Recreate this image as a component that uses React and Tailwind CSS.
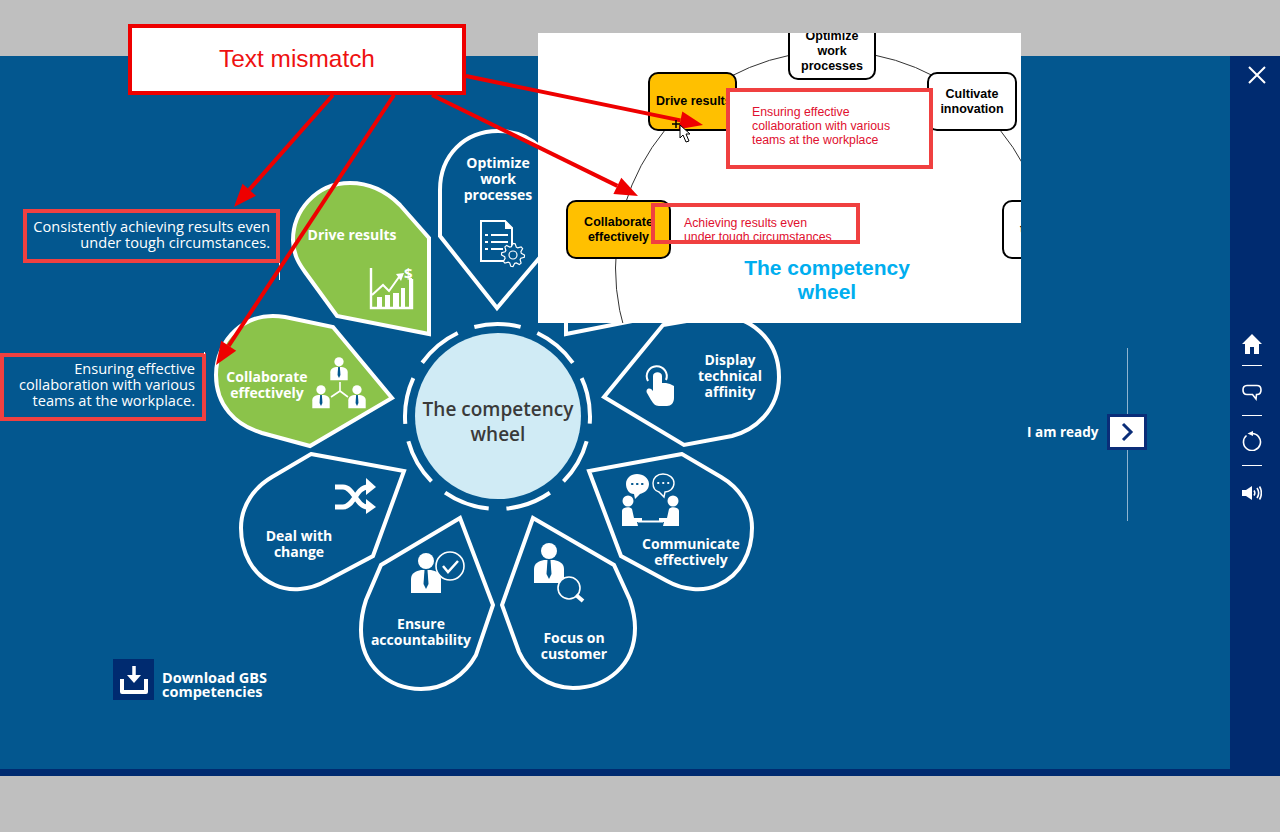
import React from "react";

const petals = [
  { name: "optimize", d: "M497 308 L440 236 L440 190 C440 155 465 131 498 131 C531 131 558 155 558 190 L558 236 Z" },
  { name: "cultivate", d: "M566 334 L566 238 L595 205 C610 190 627 183 645 183 C680 183 702 212 702 240 C702 255 695 265 690 272 L658 316 Z" },
  { name: "display", d: "M604 397 L663 325 L710 317 C750 312 779 340 779 377 C779 410 755 430 732 436 L684 445 Z" },
  { name: "communicate", d: "M682 454 L589 471 L621 556 L667 581 C683 590 703 592 718 585 C741 575 752 552 752 528 C752 505 738 487 721 477 Z" },
  { name: "focus", d: "M533 518 L614 565 L630 600 C634 612 635 620 635 628 C635 665 607 688 573 688 C548 688 528 672 519 652 L502 605 Z" },
  { name: "ensure", d: "M460 518 L381 565 L366 600 C362 612 361 620 361 630 C361 665 388 689 421 689 C445 689 465 675 476 655 L493 605 Z" },
  { name: "deal", d: "M311 454 L404 471 L373 556 L326 581 C310 590 290 592 275 585 C252 575 241 552 241 528 C241 505 255 487 272 477 Z" },
  { name: "collaborate", d: "M392 398 L333 327 L285 317 C245 310 216 340 216 375 C216 405 235 425 262 433 L310 446 Z", fill: "#8bc34a" },
  { name: "drive", d: "M429 334 L429 238 L400 205 C385 190 368 183 350 183 C315 183 293 212 293 240 C293 255 300 265 305 272 L337 316 Z", fill: "#8bc34a" },
];

const annotationArrows = [
  [466, 76, 703, 125],
  [432, 95, 638, 196],
  [333, 95, 234, 207],
  [394, 95, 216, 365],
];

// gear outline for the optimize icon
const gearPoints = (cx, cy, outer, inner, teeth) => {
  const pts = [];
  for (let i = 0; i < teeth * 4; i++) {
    const a = (i / (teeth * 4)) * Math.PI * 2;
    const r = i % 4 < 2 ? outer : inner;
    pts.push(`${(cx + r * Math.cos(a)).toFixed(1)},${(cy + r * Math.sin(a)).toFixed(1)}`);
  }
  return pts.join(" ");
};

const Person = ({ x, y, s = 1, tie = false }) => (
  <g transform={`translate(${x} ${y}) scale(${s})`}>
    <circle cx="0" cy="-9" r="8" fill="#fff" />
    <path d="M-15 23 L-15 9 C-15 3 -10 1 -5 0 L5 0 C10 1 15 3 15 9 L15 23 Z" fill="#fff" />
    {tie && <path d="M-1.5 0 L1.5 0 L2.5 14 L0 19 L-2.5 14 Z" fill="#03578f" />}
  </g>
);

const Arrow = ({ coords }) => {
  const [x1, y1, x2, y2] = coords;
  const len = Math.hypot(x2 - x1, y2 - y1);
  const ux = (x2 - x1) / len;
  const uy = (y2 - y1) / len;
  const bx = x2 - ux * 23;
  const by = y2 - uy * 23;
  return (
    <g>
      <line x1={x1} y1={y1} x2={bx} y2={by} stroke="#ee0000" strokeWidth="4" />
      <polygon
        points={`${x2},${y2} ${bx - uy * 9},${by + ux * 9} ${bx + uy * 9},${by - ux * 9}`}
        fill="#ee0000"
      />
    </g>
  );
};

const WheelDrawing = () => (
  <svg className="absolute left-0 top-0 h-[713px] w-[1230px]" viewBox="0 56 1230 713">
    {petals.map((p) => (
      <path key={p.name} d={p.d} fill={p.fill || "none"} stroke="#fff" strokeWidth="4" />
    ))}
    <circle
      cx="497.5"
      cy="416.5"
      r="92.5"
      fill="none"
      stroke="#fff"
      strokeWidth="4"
      pathLength="360"
      strokeDasharray="29 11"
      transform="rotate(-104.5 497.5 416.5)"
    />

    {/* optimize: document + gear */}
    <path d="M481 221 H505 L512 228 V261 H481 Z" fill="none" stroke="#fff" strokeWidth="2" />
    <path d="M505 220 V229 H513 Z" fill="#fff" />
    <path d="M491 235 H508 M491 242 H508 M491 249 H503" stroke="#fff" strokeWidth="2" />
    <path d="M485 235 H488 M485 242 H488 M485 249 H488" stroke="#fff" strokeWidth="2" />
    <polygon points={gearPoints(513, 255, 11.5, 8.5, 8)} fill="#03578f" stroke="#fff" strokeWidth="1.2" />
    <circle cx="513" cy="255" r="4" fill="none" stroke="#fff" strokeWidth="1.2" />

    {/* drive: growth chart */}
    <path d="M371 268 V308 H412 V279" fill="none" stroke="#fff" strokeWidth="2.4" />
    <path d="M409 278 H412 V308 H409 Z" fill="#fff" />
    <path d="M377 297 H382 V308 H377 Z M385 295 H390 V308 H385 Z M393 293 H399 V308 H393 Z M401 288 H405 V308 H401 Z" fill="#fff" />
    <path d="M372 295 L383 285 L389 291 L399 277" fill="none" stroke="#fff" strokeWidth="2" />
    <polygon points="396,274 404,273 401,281" fill="#fff" />

    {/* collaborate: three people */}
    <Person x={339} y={367} s={0.58} tie />
    <Person x={321} y={395} s={0.58} tie />
    <Person x={357} y={395} s={0.58} tie />
    <path d="M340 382 V391 M340 391 L331 397 M340 391 L348 397" stroke="#fff" strokeWidth="1.6" fill="none" />

    {/* deal: shuffle */}
    <path d="M335 487 H343 C354 487 356 507 368 507 M335 507 H343 C354 507 356 487 368 487" fill="none" stroke="#fff" strokeWidth="5" />
    <polygon points="366,478 376,487 366,495" fill="#fff" />
    <polygon points="366,499 376,507 366,514" fill="#fff" />

    {/* ensure: person + tick */}
    <Person x={426} y={570} tie />
    <circle cx="450" cy="566" r="14" fill="#03578f" stroke="#fff" strokeWidth="1.6" />
    <path d="M443 566 L448 572 L458 561" fill="none" stroke="#fff" strokeWidth="2.5" />

    {/* focus: person + magnifier */}
    <Person x={549} y={560} tie />
    <circle cx="569" cy="588" r="11" fill="#03578f" stroke="#fff" strokeWidth="1.6" />
    <path d="M576 595 L583 601" stroke="#fff" strokeWidth="4" />

    {/* communicate: bubbles + seated people */}
    <path d="M637 474 C643 474 649 478 649 484 C649 490 644 493 640 494 L635 499 L634 494 C629 494 626 489 626 484 C626 478 631 474 637 474 Z" fill="#fff" />
    <path d="M632 484 H632.5 M637 484 H637.5 M642 484 H642.5" stroke="#03578f" strokeWidth="2.2" strokeLinecap="round" />
    <path d="M663 474 C669 474 674 478 674 483 C674 489 669 492 665 492 L664 497 L659 492 C655 491 653 488 653 483 C653 478 657 474 663 474 Z" fill="none" stroke="#fff" strokeWidth="1.4" />
    <path d="M658 483 H658.5 M663 483 H663.5 M668 483 H668.5" stroke="#fff" strokeWidth="1.8" strokeLinecap="round" />
    <circle cx="628" cy="501" r="5.5" fill="#fff" />
    <circle cx="673" cy="501" r="5.5" fill="#fff" />
    <path d="M622 526 V511 C622 507 630 506 632 509 L634 518 H642 V522 H637 L638 526 Z" fill="#fff" />
    <path d="M679 526 V511 C679 507 671 506 669 509 L667 518 H659 V522 H664 L663 526 Z" fill="#fff" />
    <path d="M638 521.5 H663" stroke="#fff" strokeWidth="2" />

    {/* display: pointing hand */}
    <path d="M648 381 A10 10 0 1 1 666 380" fill="none" stroke="#fff" strokeWidth="2" />
    <path d="M653 376 C653 371 662 371 662 376 V383 L666 383 L670 384 L674 386 V398 C674 403 671 406 667 406 H659 C655 406 653 403 651 400 L647 393 C645 389 650 386 653 391 Z" fill="#fff" />
  </svg>
);

const PetalLabel = ({ className, children }) => (
  <div className={`absolute w-[120px] text-center font-['Open_Sans',sans-serif] text-[14px] font-bold leading-4 text-white ${className}`}>
    {children}
  </div>
);

// pasted slide from the spec, sits over the wheel
const SpecPanel = () => (
  <div className="absolute left-[538px] top-[33px] h-[290px] w-[483px] overflow-hidden bg-white font-['Liberation_Sans',sans-serif]">
    <svg className="absolute left-0 top-0 h-[290px] w-[483px]" viewBox="538 33 483 290">
      <circle cx="832.5" cy="268" r="217" fill="none" stroke="#333" strokeWidth="1" />
    </svg>

    <div className="absolute -top-[20px] left-[250px] flex h-[67px] w-[88px] flex-col items-center justify-end rounded-[10px] border-2 border-black bg-white pb-[4px] text-center text-[12.5px] font-bold leading-[15px] text-black">
      <span>Optimize</span>
      <span>work</span>
      <span>processes</span>
    </div>
    <div className="absolute left-[110px] top-[39px] flex h-[59px] w-[89px] items-center rounded-[10px] border-2 border-black bg-[#ffc000] pl-[6px] text-[12.5px] font-bold whitespace-nowrap text-black">
      Drive results
    </div>
    <div className="absolute left-[389px] top-[39px] flex h-[59px] w-[90px] flex-col items-center justify-center rounded-[10px] border-2 border-black bg-white text-[12.5px] font-bold leading-[15px] text-black">
      <span>Cultivate</span>
      <span>innovation</span>
    </div>
    <div className="absolute left-[28px] top-[167px] flex h-[59px] w-[105px] flex-col items-center justify-center rounded-[10px] border-2 border-black bg-[#ffc000] text-[12.5px] font-bold leading-[15px] text-black">
      <span>Collaborate</span>
      <span>effectively</span>
    </div>
    <div className="absolute left-[464px] top-[167px] flex h-[59px] w-[90px] flex-col items-center justify-center rounded-[10px] border-2 border-black bg-white text-[12.5px] font-bold leading-[15px] text-black">
      <span>Display</span>
      <span>technical</span>
      <span>affinity</span>
    </div>

    <div className="absolute left-[188px] top-[55px] h-[81px] w-[207px] border-4 border-[#f04040] bg-white pl-[22px] pt-[13px] text-[12.3px] leading-[14px] text-[#e0102f]">
      <div>Ensuring effective</div>
      <div>collaboration with various</div>
      <div>teams at the workplace</div>
    </div>

    <div className="absolute left-[146px] top-[183px] text-[12.3px] leading-[14px] text-[#e0102f]">
      <div>Achieving results even</div>
      <div>under tough circumstances</div>
    </div>
    <div className="absolute left-[113px] top-[170px] h-[41px] w-[209px] border-4 border-[#f04040]" />

    <div className="absolute left-[189px] top-[223px] w-[200px] text-center text-[21px] font-bold leading-6 text-[#00aeef]">
      The competency
      <br />
      wheel
    </div>
  </div>
);

const SideBar = () => (
  <aside className="flex w-[50px] flex-col items-center bg-[#002b70] pr-[6px] pt-[10px] text-white">
    <svg className="ml-[10px] h-[18px] w-[18px]" viewBox="0 0 18 18" fill="none" stroke="#fff" strokeWidth="2">
      <path d="M1 1 L17 17 M17 1 L1 17" />
    </svg>
    <svg className="mt-[250px] h-5 w-5" viewBox="0 0 20 20" fill="#fff">
      <path d="M10 0 L20 10 H17 V20 H12 V13 H8 V20 H3 V10 H0 Z" />
    </svg>
    <div className="mt-[11px] h-px w-5 bg-white" />
    <svg className="mt-4 h-5 w-5" viewBox="0 0 20 20" fill="none" stroke="#fff" strokeWidth="1.6">
      <path d="M5 3.5 H15 C18 3.5 19 5.5 19 8 C19 10.5 18 12.5 15 12.5 H14.5 L14 17 L10.5 12.5 H5 C2 12.5 1 10.5 1 8 C1 5.5 2 3.5 5 3.5 Z" />
    </svg>
    <div className="mt-[13px] h-px w-5 bg-white" />
    <svg className="mt-[15px] h-5 w-5" viewBox="0 0 20 20" fill="none" stroke="#fff" strokeWidth="1.6">
      <path d="M4.5 4.5 A8.5 8.5 0 1 0 10 2.5" />
      <path d="M11 0 L5.5 2.5 L11 5 Z" fill="#fff" stroke="none" />
    </svg>
    <div className="mt-[14px] h-px w-5 bg-white" />
    <svg className="mt-[17px] h-5 w-5" viewBox="0 0 20 20" fill="none" stroke="#fff" strokeWidth="1.6">
      <path d="M0 7 H4 L10 3 V17 L4 13 H0 Z" fill="#fff" stroke="none" />
      <path d="M12 7.5 C13 9 13 11 12 12.5 M15 5 C17 8 17 12 15 15 M17.5 3.5 C20 7 20 13 17.5 16.5" />
    </svg>
  </aside>
);

export default function App() {
  return (
    <div className="relative flex h-[832px] w-[1280px] flex-col overflow-hidden bg-[#bfbfbf] font-['Open_Sans',sans-serif]">
      <div className="h-14" />

      <div className="flex h-[713px]">
        <main className="relative flex-1 bg-[#03578f]">
          <WheelDrawing />

          <PetalLabel className="left-[438px] top-[99px]">Optimize<br />work<br />processes</PetalLabel>
          <PetalLabel className="left-[292px] top-[171px]">Drive results</PetalLabel>
          <span className="absolute left-[404px] top-[209px] text-[15px] font-bold leading-4 text-white">$</span>
          <PetalLabel className="left-[207px] top-[313px]">Collaborate<br />effectively</PetalLabel>
          <PetalLabel className="left-[239px] top-[472px]">Deal with<br />change</PetalLabel>
          <PetalLabel className="left-[361px] top-[560px]">Ensure<br />accountability</PetalLabel>
          <PetalLabel className="left-[514px] top-[574px]">Focus on<br />customer</PetalLabel>
          <PetalLabel className="left-[631px] top-[480px]">Communicate<br />effectively</PetalLabel>
          <PetalLabel className="left-[670px] top-[296px]">Display<br />technical<br />affinity</PetalLabel>

          <div className="absolute left-[415px] top-[277px] flex h-[166px] w-[166px] items-center justify-center rounded-full bg-[#d0ebf5] pt-[11px] text-center text-[19px] font-semibold leading-[25px] text-[#3a3a3a]">
            <span>The competency<br />wheel</span>
          </div>

          {/* download link */}
          <div className="absolute left-[113px] top-[603px] flex items-center gap-2">
            <div className="flex h-[41px] w-[41px] items-center justify-center bg-[#002b70]">
              <svg className="h-[30px] w-[30px]" viewBox="0 0 30 30" fill="none" stroke="#fff">
                <path d="M15 1 V13" strokeWidth="3.5" />
                <path d="M8 10 L15 18 L22 10 Z" fill="#fff" stroke="none" />
                <path d="M3 14 V27 H27 V14" strokeWidth="4" strokeLinejoin="round" />
              </svg>
            </div>
            <div className="pt-[11px] text-[14.5px] font-bold leading-[14px] text-white">
              Download GBS<br />competencies
            </div>
          </div>

          {/* next step */}
          <div className="absolute left-[1027px] top-[292px] flex h-[173px] items-center gap-[9px] pb-[5px]">
            <span className="text-[13.5px] font-bold whitespace-nowrap text-white">I am ready</span>
            <div className="absolute left-[100px] top-0 h-full w-px bg-[#8fb4d0]" />
            <button className="relative flex h-9 w-10 items-center justify-center border-[3px] border-[#0a2d78] bg-white text-[#0a2d78]">
              <svg className="h-5 w-5" viewBox="0 0 20 20" fill="none" stroke="currentColor" strokeWidth="3">
                <path d="M6 2 L14 10 L6 18" />
              </svg>
            </button>
          </div>
        </main>
        <SideBar />
      </div>

      <div className="h-[7px] bg-[#002b70]" />

      {/* review annotations laid over the capture */}
      <SpecPanel />

      <div className="absolute left-[128px] top-[24px] flex h-[71px] w-[338px] items-center justify-center border-4 border-[#ee0000] bg-white font-['Liberation_Sans',sans-serif] text-[24.4px] text-[#ee1111]">
        Text mismatch
      </div>

      <div className="absolute left-[23px] top-[209px] h-[54px] w-[257px] border-4 border-[#f04040] pr-[6px] pt-[5px] text-right text-[14.6px] leading-4 text-white">
        Consistently achieving results even<br />under tough circumstances.
      </div>
      <div className="absolute left-0 top-[353px] h-[68px] w-[206px] border-4 border-[#f04040] pr-[7px] pt-[3px] text-right text-[14.6px] leading-4 text-white">
        Ensuring effective<br />collaboration with various<br />teams at the workplace.
      </div>

      <svg className="pointer-events-none absolute left-0 top-0 h-[832px] w-[1280px]" viewBox="0 0 1280 832">
        <path d="M279.5 263 V280 M204.5 352 V354" stroke="#fff" strokeWidth="1" />
        {annotationArrows.map((a) => (
          <Arrow key={a.join("-")} coords={a} />
        ))}
        {/* mouse pointer left in the capture */}
        <path d="M680 125 V138 L683 135 L686 142 L689 141 L686 134 L690 134 Z" fill="#fff" stroke="#000" strokeWidth="1" />
        <path d="M672 124 H680 M676 120 V128" stroke="#000" strokeWidth="1.5" />
      </svg>
    </div>
  );
}
